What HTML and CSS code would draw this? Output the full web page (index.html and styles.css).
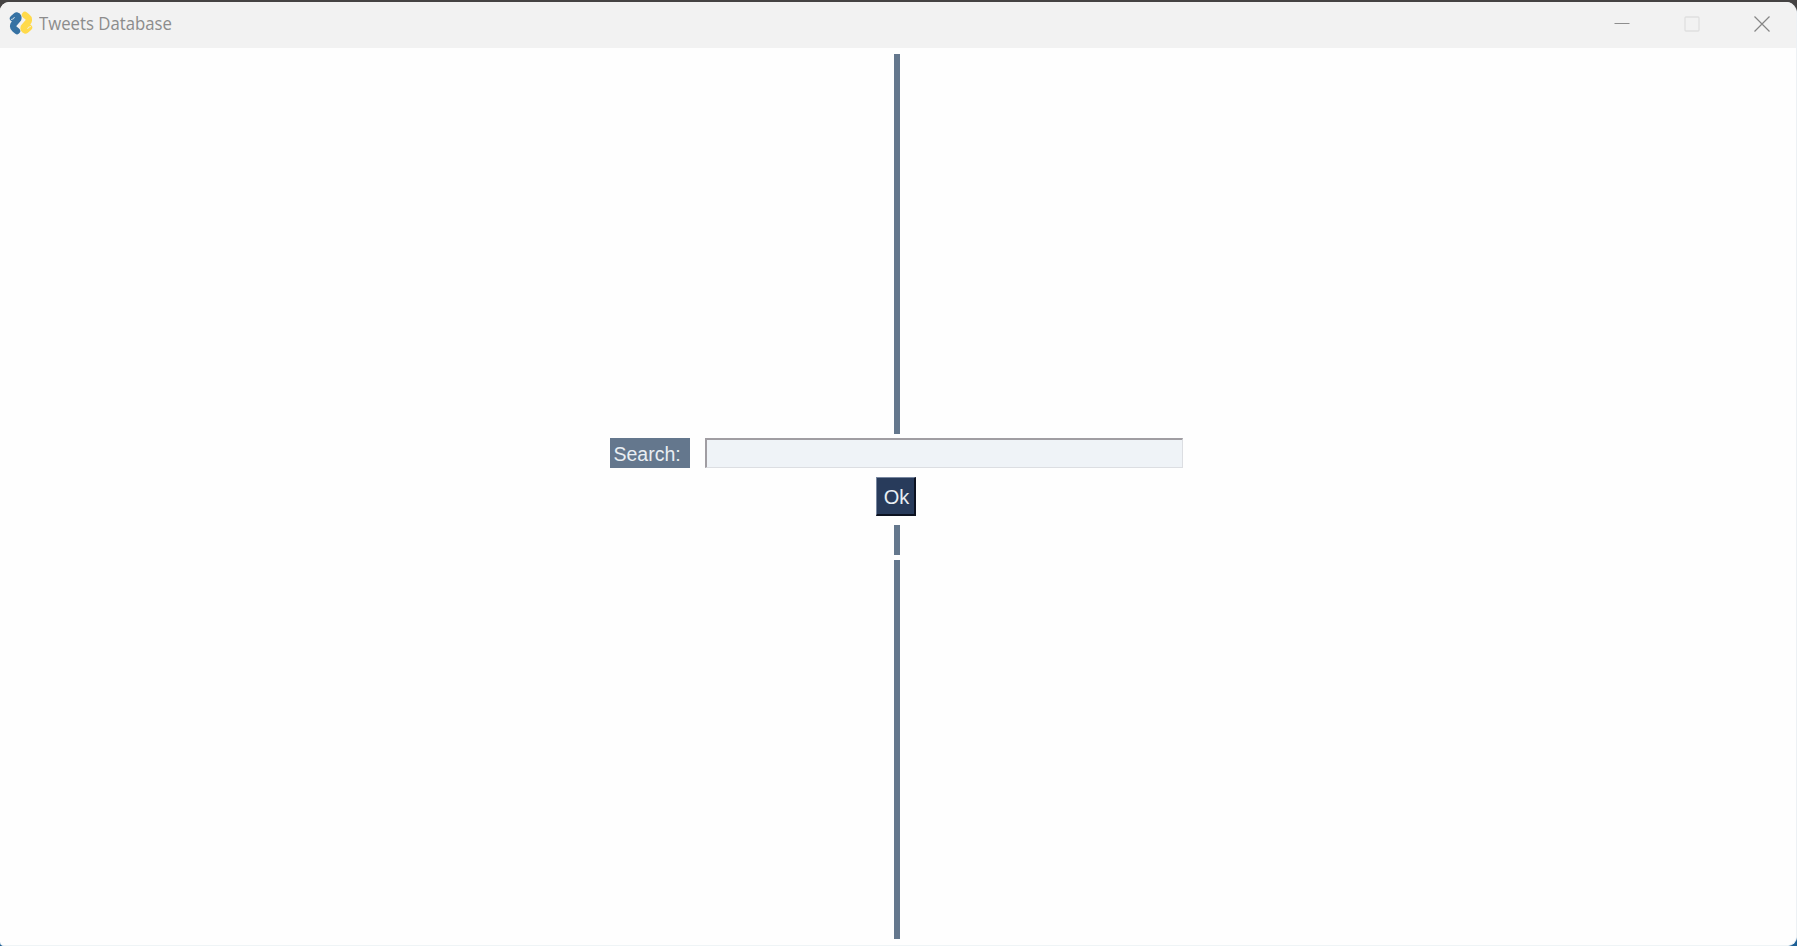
FILE: index.html
```
<!DOCTYPE html>
<html lang="en">
<head>
<meta charset="utf-8">
<title>Tweets Database</title>
<link rel="stylesheet" href="styles.css">
</head>
<body>
<div class="window">
  <header class="titlebar">
    <svg class="logo" width="24" height="24" viewBox="0 0 24 24">
      <g fill="none" stroke-width="6.400" stroke-linecap="round" stroke-linejoin="round">
        <path d="M4 7.500L7.500 4.500Q10 5 9.200 8L4.500 13.500Q3.500 16.500 5.500 18L8 20" stroke="#3672a3"/>
        <path d="M20 16.500L16.500 19.500Q14 19 14.800 16L19.500 10.500Q20.500 7.500 18.500 6L16 4" stroke="#ffda4b"/>
      </g>
      <path d="M2 8.500Q5 8.500 5.500 6M22 15.500Q19 15.500 18.500 18" fill="none" stroke="#f2f2f2" stroke-width=".8"/>
    </svg>
    <span class="title">Tweets Database</span>
    <div class="controls">
      <svg width="16" height="16" viewBox="0 0 16 16"><path d="M.5 7.500H15.500" stroke="#8e8e8e"/></svg>
      <svg width="16" height="16" viewBox="0 0 16 16"><rect x="1" y="1" width="14" height="14" rx="1" fill="none" stroke="#dfdfdf" stroke-width="1.300"/></svg>
      <svg width="16" height="16" viewBox="0 0 16 16"><path d="M.5 .5L15.500 15.500M15.500 .5L.5 15.500" stroke="#858585" stroke-width="1.200"/></svg>
    </div>
  </header>
  <main class="content">
    <div class="bar bar-long"></div>
    <div class="search-row">
      <label class="label" for="q">Search:</label>
      <input class="field" id="q" type="text">
    </div>
    <button class="ok"><span class="ok-text">Ok</span></button>
    <div class="bar bar-short"></div>
    <div class="bar bar-long"></div>
  </main>
</div>
</body>
</html>
```
FILE: styles.css
```
body {
  margin: 0;
  height: 946px;
  box-sizing: border-box;
  padding-top: 2px;
  overflow: hidden;
  background: linear-gradient(#454343 50%, #1c5f96 50%);
}
.window {
  height: 944px;
  box-sizing: border-box;
  border-right: 1px solid #edf1f4;
  border-bottom: 1px solid #eff4f6;
  border-radius: 9px 11px 9px 4px;
  overflow: hidden;
  background: #fefefe;
}
.titlebar {
  display: flex;
  align-items: center;
  height: 45.5px;
  box-sizing: border-box;
  padding: 0 26px 0 9px;
  background: #f2f2f2;
}
.logo { margin-top: -3px; }
.title {
  margin: -4px 0 0 6px;
  font: 18px/24px "Open Sans", "Noto Sans", sans-serif;
  color: #8c8c8c;
  transform: scaleX(.93);
  transform-origin: left;
  white-space: nowrap;
}
.controls {
  display: flex;
  margin-left: auto;
  gap: 54px;
}
.controls svg { display: block; margin-top: -2px; }
.content {
  display: flex;
  flex-direction: column;
  align-items: center;
  padding: 6.5px 2px 0 0;
}
.bar { width: 6px; background: #64778d; }
.bar-long { height: 380px; }
.search-row {
  display: flex;
  gap: 15px;
  margin: 4px 1px 9px 0;
}
.label {
  width: 80px;
  height: 30px;
  box-sizing: border-box;
  padding-left: 3.5px;
  background: #64778d;
  color: #e9eef3;
  font: 19.5px/32px "Liberation Sans", Arial, sans-serif;
}
.field {
  width: 478px;
  height: 30px;
  box-sizing: border-box;
  margin: 0;
  padding: 0 4px;
  border: 1px solid #dcdee2;
  border-top: 2px solid #a09da2;
  border-left: 2px solid #a09da2;
  border-radius: 0;
  background: #eff3f7;
  font: 20px "Liberation Sans", Arial, sans-serif;
}
.ok {
  width: 40px;
  height: 39px;
  margin-right: 2px;
  padding: 1px 0 0 1px;
  border: 2px solid #0c1220;
  border-top: 1px solid #7887a0;
  border-left: 1px solid #7887a0;
  border-radius: 0;
  background: #283b5b;
  color: #e9eef3;
  font: 20px "Liberation Sans", Arial, sans-serif;
}
.ok-text { display: block; padding: 2px 0 0 1px; }
.bar-short { height: 30px; margin: 9px 0 5px; }
.bar-short + .bar-long { height: 379px; }
```
